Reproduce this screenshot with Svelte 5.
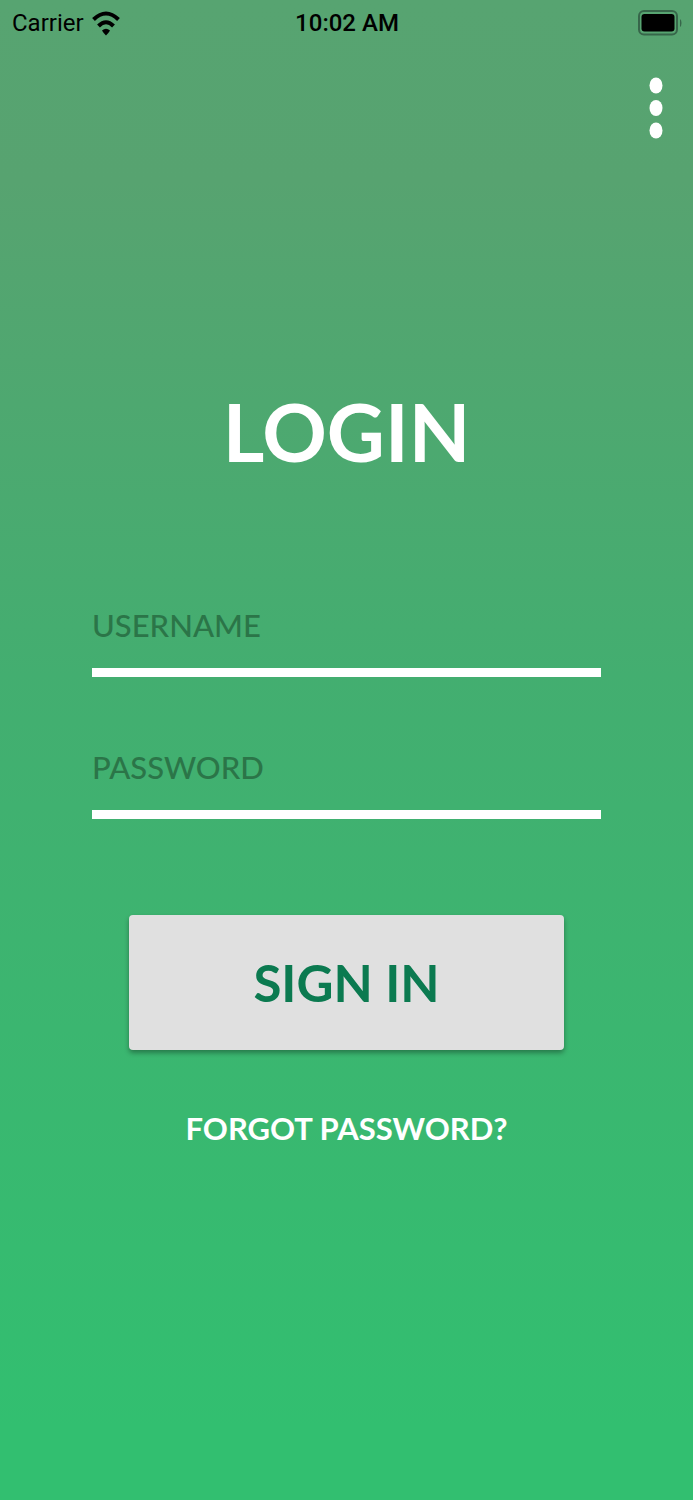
<script>
let username = ``;
let password = ``;
</script>

<div class="screen">
  <header class="status">
    <div class="carrier">
      <span>Carrier</span>
      <svg width="28" height="25" viewBox="0 0 28 25" aria-hidden="true">
        <g class="waves">
          <path d="M1.500 8.500Q14-3.500 26.500 8.500" />
          <path d="M6.500 15Q14 7.500 21.500 15" />
        </g>
        <path d="M10 19.500Q14 16 18 19.500Q17 21.500 14 24.500Q11 21.500 10 19.500Z" />
      </svg>
    </div>
    <time>10:02 AM</time>
    <svg class="battery" width="44" height="26" viewBox="0 0 44 26" aria-hidden="true">
      <rect class="shell" x="1" y="1" width="38" height="23.500" rx="5" />
      <rect x="3.500" y="4" width="33" height="17.500" rx="3" />
      <path class="cap" d="M42 9Q43.500 10 43.500 13Q43.500 16 42 17Z" />
    </svg>
  </header>

  <button class="menu" type="button" aria-label="Menu">
    <svg width="14" height="62" viewBox="0 0 14 62" aria-hidden="true">
      <ellipse cx="7" cy="8.500" rx="6.500" ry="8" />
      <ellipse cx="7" cy="31" rx="6.500" ry="8" />
      <ellipse cx="7" cy="53.500" rx="6.500" ry="8" />
    </svg>
  </button>

  <main>
    <h1>LOGIN</h1>
    <form on:submit|preventDefault>
      <input type="text" placeholder="USERNAME" aria-label="Username" bind:value={username} />
      <input type="password" placeholder="PASSWORD" aria-label="Password" bind:value={password} />
      <button class="submit" type="submit">SIGN IN</button>
    </form>
    <a href="#forgot">FORGOT PASSWORD?</a>
  </main>
</div>

<style>
  :global(body) {
    margin: 0;
  }
  .screen {
    box-sizing: border-box;
    min-height: 100vh;
    display: flex;
    flex-direction: column;
    background: linear-gradient(#57a471 0%, #57a370 12%, #43ae70 45%, #32bf70 95%);
    font-family: Lato, sans-serif;
    color: white;
  }
  .status {
    display: grid;
    grid-template-columns: 1fr auto 1fr;
    align-items: center;
    height: 46px;
    padding: 0 11px 0 12px;
    color: black;
    font: 24px/32px Roboto, sans-serif;
  }
  .status time {
    font-weight: 500;
  }
  .carrier {
    display: flex;
    align-items: center;
    gap: 8px;
  }
  .waves {
    fill: none;
    stroke: black;
    stroke-width: 4;
  }
  .battery {
    justify-self: end;
  }
  .shell {
    fill: none;
    stroke: #37664a;
    stroke-width: 2;
  }
  .cap {
    fill: #37664a;
  }
  button {
    border: none;
    padding: 0;
    background: none;
    cursor: pointer;
  }
  .menu {
    align-self: flex-end;
    margin: 31px 30px 0 0;
    line-height: 0;
  }
  .menu svg {
    fill: white;
  }
  main {
    display: flex;
    flex-direction: column;
    align-items: center;
    padding-top: 236px;
  }
  h1 {
    margin: 0;
    font-size: 80px;
    line-height: 112px;
    font-weight: 700;
  }
  form {
    box-sizing: border-box;
    display: flex;
    flex-direction: column;
    width: 100%;
    padding: 0 92px;
  }
  input {
    box-sizing: border-box;
    width: 100%;
    height: 92px;
    margin-top: 98px;
    padding: 0 0 4px;
    border: none;
    border-bottom: 9px solid white;
    border-radius: 0;
    outline: none;
    background: none;
    color: white;
    font: 500 31px/40px Lato, sans-serif;
  }
  input + input {
    margin-top: 50px;
  }
  input::placeholder {
    color: #2b7548;
    opacity: 1;
  }
  .submit {
    height: 135px;
    margin: 96px 37px 0;
    border-radius: 4px;
    background: #e0e0e0;
    box-shadow: 0 3px 5px #0005;
    color: #0b7a50;
    font: 700 51px/68px Lato, sans-serif;
  }
  a {
    margin-top: 58px;
    color: white;
    font-size: 31px;
    line-height: 40px;
    font-weight: 700;
    text-decoration: none;
  }
</style>
